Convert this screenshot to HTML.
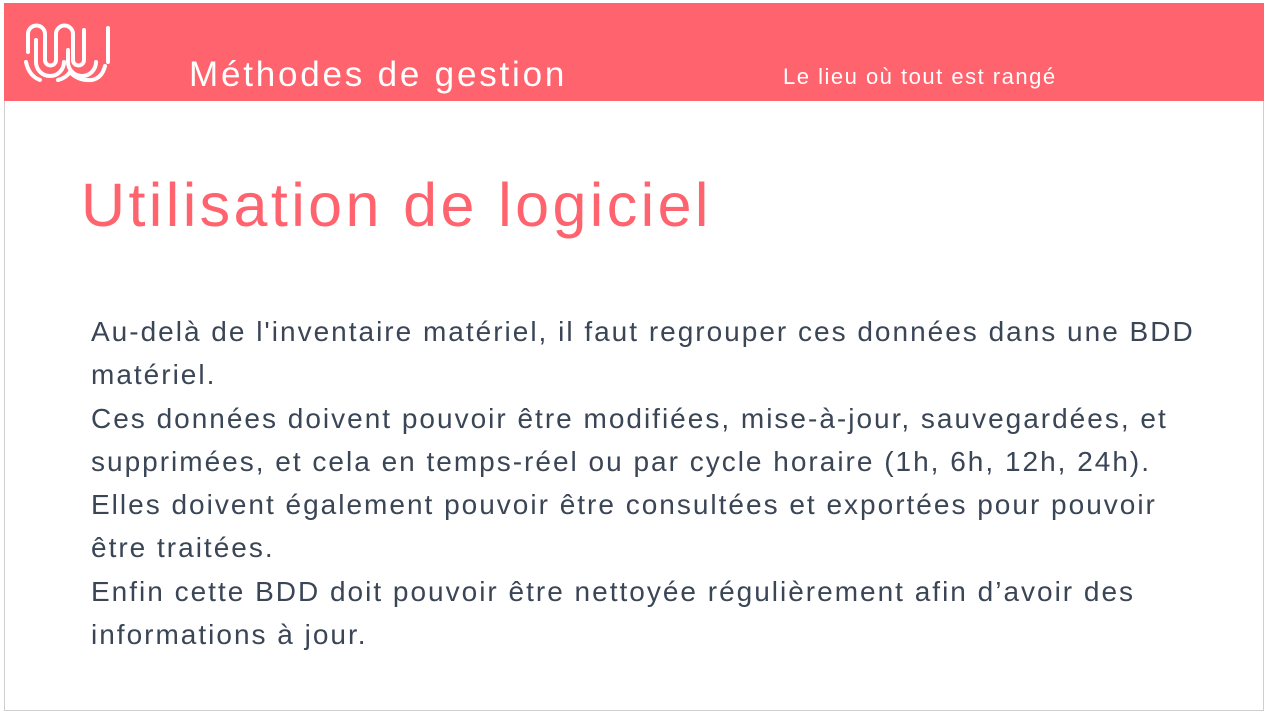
<!DOCTYPE html>
<html><head><meta charset="utf-8"><style>
body{margin:0;width:1266px;height:714px;background:#fff;position:relative;overflow:hidden;font-family:"Liberation Sans",sans-serif}
.frame{position:absolute;left:4px;top:3px;width:1258px;height:706px;border:1px solid #cfcfcf}
.hdr{position:absolute;left:4px;top:3px;width:1260px;height:98px;background:#ff636e}
.t{position:absolute;white-space:nowrap}
</style></head><body>
<div class="frame"></div>
<div class="hdr"></div>
<svg style="position:absolute;left:0;top:0" width="130" height="100" viewBox="0 0 130 100" fill="none" stroke="#fff" stroke-width="4" stroke-linecap="round">
<path d="M28 52V34a8.5 8.5 0 0 1 17 0V60a5.5 5.5 0 0 0 11 0V34a8.5 8.5 0 0 1 17 0V60a5.5 5.5 0 0 0 11 0V30"/>
<path d="M36 40V62a14 14 0 0 0 28 0"/>
<path d="M68 50V62a14 14 0 0 0 28 0"/>
<path d="M108 28V62"/>
<path d="M26 62q3 14 14 18"/>
<path d="M58 80q8-2 12-8q8 9 22 8q10-2 13-14"/>
</svg>
<div class="t" style="left:189px;top:55px;font-size:35px;color:#fff;letter-spacing:2.8px">Méthodes de gestion</div>
<div class="t" style="left:783px;top:64px;font-size:22px;color:#fff;letter-spacing:1.5px">Le lieu où tout est rangé</div>
<div class="t" style="left:81px;top:170px;font-size:61px;color:#ff636e;letter-spacing:3.4px">Utilisation de logiciel</div>
<div class="t" style="left:91px;top:310px;font-size:28px;line-height:43.3px;color:#3a4556;letter-spacing:2px">Au-delà de l'inventaire matériel, il faut regrouper ces données dans une BDD<br>matériel.<br>Ces données doivent pouvoir être modifiées, mise-à-jour, sauvegardées, et<br>supprimées, et cela en temps-réel ou par cycle horaire (1h, 6h, 12h, 24h).<br>Elles doivent également pouvoir être consultées et exportées pour pouvoir<br>être traitées.<br>Enfin cette BDD doit pouvoir être nettoyée régulièrement afin d’avoir des<br>informations à jour.</div>
</body></html>
